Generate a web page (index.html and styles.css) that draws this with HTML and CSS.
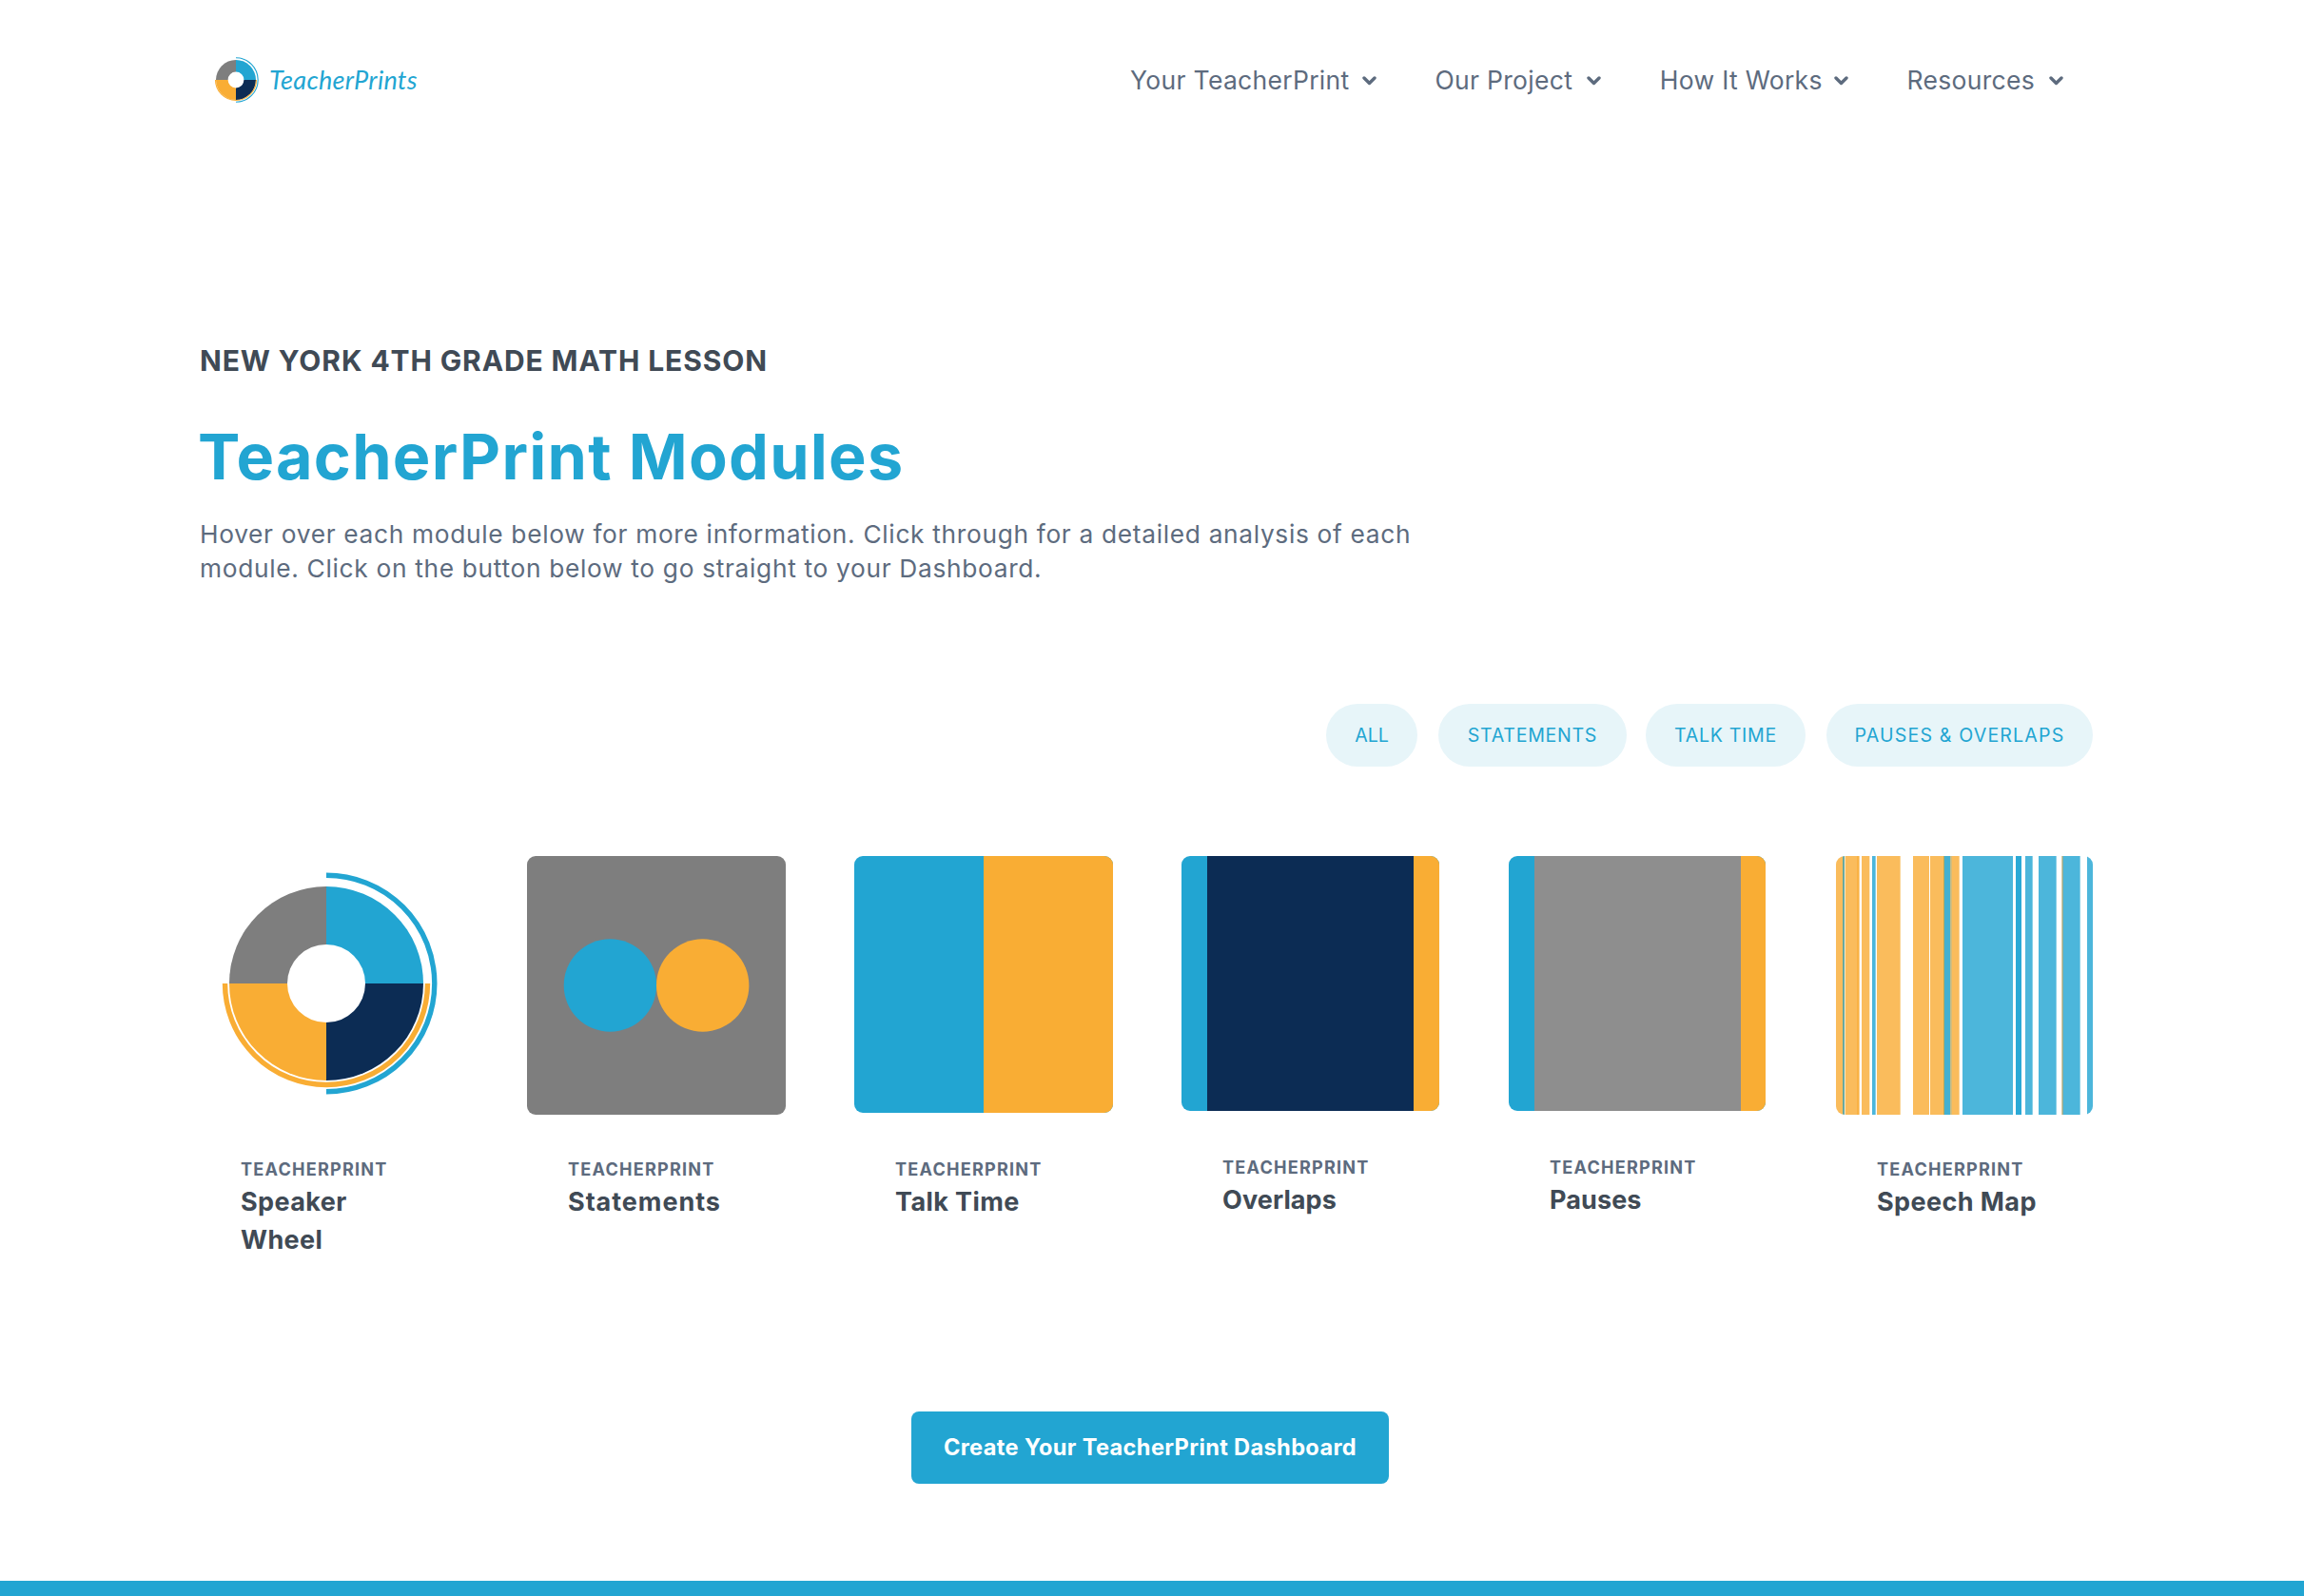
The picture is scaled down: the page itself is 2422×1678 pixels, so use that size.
FILE: index.html
```
<!DOCTYPE html>
<html lang="en">
<head>
<meta charset="utf-8">
<title>TeacherPrint Modules</title>
<link rel="stylesheet" href="styles.css">
</head>
<body>
<header class="header">
  <a class="logo">
    <svg class="logo-mark" viewBox="-24 -24 48 48">
      <path d="M-21 0A21 21 0 0 1 0-21V0Z" fill="#7e7e7e"/>
      <path d="M0-21A21 21 0 0 1 21 0H0Z" fill="#22a5d2"/>
      <path d="M21 0A21 21 0 0 1 0 21V0Z" fill="#0c2c54"/>
      <path d="M0 21A21 21 0 0 1-21 0H0Z" fill="#f9ad34"/>
      <path d="M-21.5 0A21.5 21.5 0 0 0 21.5 0" fill="none" stroke="#f9ad34" stroke-width="1.1"/>
      <path d="M0-23.2A23.2 23.2 0 0 1 0 23.2" fill="none" stroke="#22a5d2" stroke-width="1.1"/>
      <circle r="8.4" fill="#fff"/>
    </svg>
    <span class="logo-text">TeacherPrints</span>
  </a>
  <nav class="nav">
    <a class="nav-item">Your TeacherPrint<svg class="chevron" viewBox="0 0 15 10"><path d="M2 2L7.5 7.5L13 2"/></svg></a>
    <a class="nav-item">Our Project<svg class="chevron" viewBox="0 0 15 10"><path d="M2 2L7.5 7.5L13 2"/></svg></a>
    <a class="nav-item">How It Works<svg class="chevron" viewBox="0 0 15 10"><path d="M2 2L7.5 7.5L13 2"/></svg></a>
    <a class="nav-item">Resources<svg class="chevron" viewBox="0 0 15 10"><path d="M2 2L7.5 7.5L13 2"/></svg></a>
  </nav>
</header>
<main class="main">
  <h2 class="eyebrow">NEW YORK 4TH GRADE MATH LESSON</h2>
  <h1 class="title">TeacherPrint Modules</h1>
  <p class="intro">Hover over each module below for more information. Click through for a detailed analysis of each<br>module. Click on the button below to go straight to your Dashboard.</p>
  <div class="filters">
    <a class="pill pill-all">ALL</a>
    <a class="pill pill-statements">STATEMENTS</a>
    <a class="pill pill-talk">TALK TIME</a>
    <a class="pill pill-pauses">PAUSES &amp; OVERLAPS</a>
  </div>
  <div class="cards">
    <article class="card">
      <svg class="art" viewBox="0 0 272 272">
        <g transform="translate(133 134)">
          <path d="M-102 0A102 102 0 0 1 0-102V0Z" fill="#7e7e7e"/>
          <path d="M0-102A102 102 0 0 1 102 0H0Z" fill="#22a5d2"/>
          <path d="M102 0A102 102 0 0 1 0 102V0Z" fill="#0c2c54"/>
          <path d="M0 102A102 102 0 0 1-102 0H0Z" fill="#f9ad34"/>
          <path d="M-106.5 0A106.5 106.5 0 0 0 106.5 0" fill="none" stroke="#f9ad34" stroke-width="5.4"/>
          <path d="M0-113.8A113.8 113.8 0 0 1 0 113.8" fill="none" stroke="#22a5d2" stroke-width="5.4"/>
          <circle r="41" fill="#fff"/>
        </g>
      </svg>
      <div class="caption"><div class="label">TEACHERPRINT</div><h3 class="name">Speaker<br>Wheel</h3></div>
    </article>
    <article class="card">
      <svg class="art" viewBox="0 0 272 272">
        <rect width="272" height="272" fill="#7e7e7e"/>
        <circle cx="87.4" cy="136" r="48.7" fill="#22a5d2"/>
        <circle cx="184.7" cy="136" r="48.7" fill="#f9ad34"/>
      </svg>
      <div class="caption"><div class="label">TEACHERPRINT</div><h3 class="name name-statements">Statements</h3></div>
    </article>
    <article class="card">
      <svg class="art art-talk" viewBox="0 0 272 270">
        <rect width="272" height="270" fill="#22a5d2"/>
        <rect x="136" width="136" height="270" fill="#f9ad34"/>
      </svg>
      <div class="caption"><div class="label">TEACHERPRINT</div><h3 class="name">Talk Time</h3></div>
    </article>
    <article class="card card-short">
      <svg class="art" viewBox="0 0 271 268">
        <rect width="271" height="268" fill="#22a5d2"/>
        <rect x="27" width="217" height="268" fill="#0c2c54"/>
        <rect x="244" width="27" height="268" fill="#f9ad34"/>
      </svg>
      <div class="caption"><div class="label">TEACHERPRINT</div><h3 class="name name-tight">Overlaps</h3></div>
    </article>
    <article class="card card-short card-pauses">
      <svg class="art" viewBox="0 0 270 268">
        <rect width="270" height="268" fill="#22a5d2"/>
        <rect x="27" width="217" height="268" fill="#8e8e8e"/>
        <rect x="244" width="26" height="268" fill="#f9ad34"/>
      </svg>
      <div class="caption"><div class="label">TEACHERPRINT</div><h3 class="name name-tight">Pauses</h3></div>
    </article>
    <article class="card card-speech">
      <svg class="art" viewBox="0 0 810 816" preserveAspectRatio="none">
        <g fill="#fabc5c">
          <rect width="21" height="816"/><rect x="29" width="45" height="816"/><rect x="81" width="25" height="816"/>
          <rect x="129" width="74" height="816"/><rect x="243" width="51" height="816"/><rect x="297" width="43" height="816"/>
          <rect x="363" width="26" height="816"/>
        </g>
        <g fill="#4cb6db">
          <rect x="114" width="11" height="816"/><rect x="399" width="159" height="816"/><rect x="597" width="23" height="816"/>
          <rect x="639" width="56" height="816"/><rect x="717" width="53" height="816"/><rect x="792" width="18" height="816"/>
        </g>
        <rect x="21" width="6" height="816" fill="#69a9a0"/>
        <rect x="66" width="6" height="816" fill="#f9b244"/>
        <rect x="339" width="3" height="816" fill="#b5a95c"/>
        <rect x="342" width="18" height="816" fill="#44b0d0"/>
        <rect x="360" width="5" height="816" fill="#c5bd88"/>
        <rect x="567" width="18" height="816" fill="#2ba9d6"/>
        <rect x="711" width="3" height="816" fill="#d5c9a4"/>
        <rect x="714" width="3" height="816" fill="#8eae98"/>
      </svg>
      <div class="caption"><div class="label">TEACHERPRINT</div><h3 class="name">Speech Map</h3></div>
    </article>
  </div>
  <a class="cta">Create Your TeacherPrint Dashboard</a>
</main>
<footer class="footer"></footer>
</body>
</html>
```
FILE: styles.css
```
* { box-sizing: border-box; }
body {
  margin: 0;
  height: 1678px;
  display: flex;
  flex-direction: column;
  overflow: hidden;
  background: #fff;
  color: #5d6b7e;
  font-family: Inter, "Liberation Sans", sans-serif;
}
h1, h2, h3, p { margin: 0; }
svg { display: block; }

.header {
  height: 168px;
  padding: 0 253px 0 224px;
  display: flex;
  align-items: center;
  justify-content: space-between;
}
.logo { display: flex; align-items: center; gap: 11px; }
.logo-mark { width: 48px; height: 48px; }
.logo-text {
  color: #22a5d2;
  font: italic 400 27px/32px Lato, sans-serif;
  letter-spacing: 0.3px;
}
.nav {
  display: grid;
  grid-template-columns: 259px 175px 198.5px 164.5px;
  column-gap: 61.3px;
}
.nav-item {
  display: flex;
  align-items: center;
  justify-content: space-between;
  font-size: 26.5px;
  line-height: 32px;
  letter-spacing: 0.3px;
  white-space: nowrap;
}
.chevron {
  width: 15px;
  height: 10px;
  margin-top: 2px;
  fill: none;
  stroke: #5d6b7e;
  stroke-width: 3.4;
  stroke-linecap: round;
  stroke-linejoin: round;
}

.main {
  flex: none;
  height: 1494px;
  padding: 191px 222px 0 210px;
  display: flex;
  flex-direction: column;
}
.eyebrow {
  color: #404a55;
  font-size: 30px;
  line-height: 40px;
  letter-spacing: 0.88px;
}
.title {
  margin-top: 41px;
  margin-left: -2px;
  color: #22a5d2;
  font-size: 66.5px;
  line-height: 80px;
  letter-spacing: 1.25px;
}
.intro {
  margin-top: 24px;
  margin-bottom: 1px;
  font-size: 26.3px;
  line-height: 36px;
  letter-spacing: 0.68px;
  white-space: nowrap;
}

.filters {
  margin-top: 123px;
  display: flex;
  justify-content: flex-end;
  gap: 21px;
}
.pill {
  height: 66px;
  border-radius: 33px;
  background: #e7f5f9;
  color: #22a5d2;
  font-size: 19.6px;
  line-height: 66px;
  letter-spacing: 0.7px;
  text-align: center;
  white-space: nowrap;
}
.pill-all { width: 96px; letter-spacing: 0; }
.pill-statements { width: 198px; }
.pill-talk { width: 168px; }
.pill-pauses { width: 280px; letter-spacing: 1.15px; }
.pill-all, .pill-talk { margin-right: 1px; }
.pill-statements { margin-right: -1px; }

.cards {
  margin-top: 94px;
  margin-right: -12px;
  display: grid;
  grid-template-columns: repeat(5, 344px) 270px;
}
.card { display: flex; flex-direction: column; align-items: flex-start; }
.art { width: 272px; height: 272px; border-radius: 9px; }
.art-talk { height: 270px; margin-bottom: 2px; }
.card-short .art { width: 271px; height: 268px; margin-bottom: 2px; }
.card-pauses .art { width: 270px; }
.card-speech .art { width: 270px; }
.caption { padding: 45px 0 0 43px; }
.label {
  font-size: 18.1px;
  font-weight: 700;
  line-height: 24px;
  letter-spacing: 1.2px;
}
.name {
  margin-top: 3px;
  color: #404a55;
  font-size: 27px;
  line-height: 40px;
  letter-spacing: 0.4px;
  white-space: nowrap;
}
.name-statements { letter-spacing: 0.95px; }
.name-tight { letter-spacing: 0.1px; }

.cta {
  width: 502px;
  height: 76px;
  margin: 160px 0 0 748px;
  border-radius: 8px;
  background: #22a5d2;
  color: #fff;
  font-size: 23.6px;
  font-weight: 700;
  line-height: 75px;
  letter-spacing: 0.35px;
  text-align: center;
}
.footer { flex: 1; background: #22a5d2; }
```
